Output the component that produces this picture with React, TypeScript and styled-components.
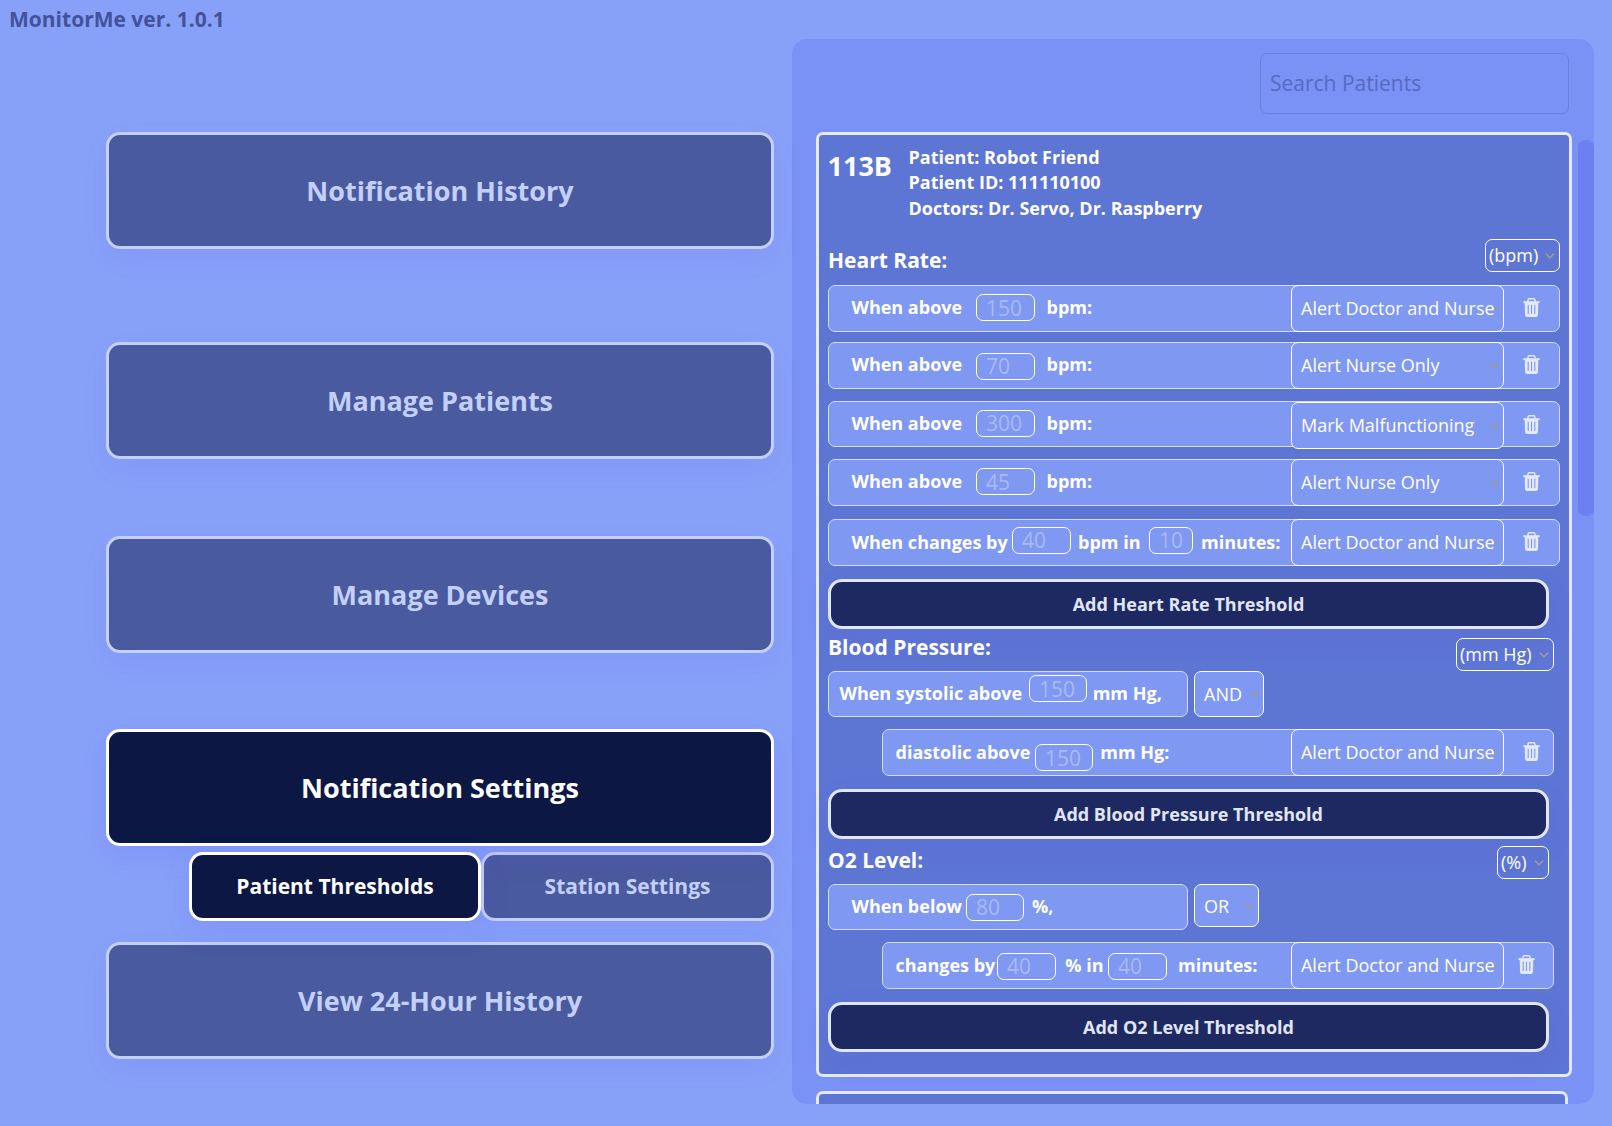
import React from "react";
import styled, { createGlobalStyle, css } from "styled-components";

const GlobalStyle = createGlobalStyle`
  *, *::before, *::after { box-sizing: border-box; }
  html, body { margin: 0; padding: 0; }
  body {
    background: #88a1f8;
    font-family: "Open Sans", "Noto Sans", sans-serif;
    overflow: hidden;
  }
`;

const Screen = styled.main`
  display: flex;
  width: 1612px;
  height: 1126px;
  background: #88a1f8;
  overflow: hidden;
`;

/* ---------- left side: navigation ---------- */

const Sidebar = styled.div`
  display: flex;
  flex-direction: column;
  width: 792px;
`;

const AppTitle = styled.h1`
  margin: 5px 0 0 9px;
  height: 127px;
  font-size: 21px;
  line-height: 28px;
  font-weight: 700;
  color: #43529a;
`;

const Nav = styled.nav`
  display: flex;
  flex-direction: column;
  width: 668px;
  margin-left: 106px;
`;

const NavButton = styled.button<{ $active?: boolean; $gap?: number }>`
  position: relative;
  z-index: ${(p) => (p.$active ? 1 : 0)};
  display: flex;
  align-items: center;
  justify-content: center;
  flex: none;
  height: 117px;
  margin: ${(p) => p.$gap ?? 0}px 0 0;
  padding: 0;
  border: 3px solid ${(p) => (p.$active ? "#ffffff" : "#c3d0fc")};
  border-radius: 14px;
  background: ${(p) => (p.$active ? "#0c1744" : "#4a5a9e")};
  color: ${(p) => (p.$active ? "#ffffff" : "#c3d0fc")};
  box-shadow: 0 10px 28px rgba(85, 80, 255, ${(p) => (p.$active ? 0.15 : 0.1)});
  font: 700 27px/36px "Open Sans", "Noto Sans", sans-serif;
`;

const SubNav = styled.div`
  display: flex;
  margin: 6px 0 0 83px;
`;

const SubButton = styled(NavButton)<{ $w: number }>`
  width: ${(p) => p.$w}px;
  height: 69px;
  padding-bottom: 1px;
  font-size: 21px;
  line-height: 28px;
`;

/* ---------- right side: patient panel ---------- */

const Panel = styled.section`
  display: flex;
  flex-direction: column;
  width: 802px;
  height: 1065px;
  margin-top: 39px;
  border-radius: 15px;
  background: #7a91f5;
  overflow: hidden;
`;

const SearchBox = styled.div`
  display: flex;
  align-items: center;
  flex: none;
  width: 309px;
  height: 61px;
  margin: 14px 25px 18px auto;
  padding: 0 0 1px 9px;
  border: 1px solid #6b80de;
  border-radius: 7px;
  color: #566bc1;
  font-size: 21px;
  line-height: 28px;
`;

const PanelBody = styled.div`
  display: flex;
  align-items: flex-start;
  flex: none;
  padding-left: 24px;
`;

const CardList = styled.div`
  display: flex;
  flex-direction: column;
  gap: 14px;
  width: 756px;
`;

const ScrollThumb = styled.div`
  width: 16px;
  height: 376px;
  margin: 8px 0 0 6px;
  border-radius: 7px;
  background: #6d80f1;
`;

const Card = styled.article<{ $w: number; $h: number }>`
  width: ${(p) => p.$w}px;
  height: ${(p) => p.$h}px;
  padding-left: 9px;
  border: 3px solid #e4e9fd;
  border-radius: 7px;
  background: #5d75d3;
  color: #fff;
`;

const CardHeader = styled.header`
  display: flex;
  height: 104px;
`;

const Room = styled.div`
  width: 81px;
  margin: 13px 0 0 -0.5px;
  font-size: 27px;
  line-height: 36px;
  font-weight: 700;
`;

const PatientInfo = styled.div`
  margin-top: 9.5px;
  font-size: 18px;
  line-height: 25.5px;
  font-weight: 700;
`;

const SectionHead = styled.div<{ $w: number; $h: number }>`
  display: flex;
  justify-content: space-between;
  align-items: flex-start;
  width: ${(p) => p.$w}px;
  height: ${(p) => p.$h}px;
`;

const SectionTitle = styled.h2<{ $top: number }>`
  margin: ${(p) => p.$top}px 0 0;
  font-size: 21px;
  line-height: 28px;
  font-weight: 700;
`;

const Row = styled.div<{
  $cols: string;
  $w?: number;
  $h?: number;
  $gap?: number;
  $indent?: number;
  $pad?: number;
}>`
  display: grid;
  grid-template-columns: ${(p) => p.$cols};
  align-items: start;
  width: ${(p) => p.$w ?? 732}px;
  height: ${(p) => p.$h ?? 47}px;
  margin: ${(p) => p.$gap ?? 0}px 0 0 ${(p) => p.$indent ?? 0}px;
  padding-left: ${(p) => p.$pad ?? 22.5}px;
  border: 1px solid #d3dcfa;
  border-radius: 7px;
  background: #7f98f2;
`;

const Clause = styled.div`
  display: flex;
  align-items: flex-start;
  gap: 6px;
`;

const Label = styled.span<{ $top?: number; $nudge?: boolean }>`
  margin-top: ${(p) => p.$top ?? 9}px;
  margin-left: ${(p) => (p.$nudge ? 1 : 0)}px;
  font-size: 18px;
  line-height: 24px;
  font-weight: 700;
  white-space: nowrap;
`;

const ValueBox = styled.span<{ $top: number; $w?: number; $drop?: boolean }>`
  display: block;
  width: ${(p) => p.$w ?? 59}px;
  height: 27px;
  margin-top: ${(p) => p.$top}px;
  padding: ${(p) => (p.$drop ? 1 : 0)}px 0 0 9px;
  border: 1px solid #fff;
  border-radius: 7px;
  color: #a9baf7;
  font-size: 21px;
  line-height: 24px;
`;

const SelectBox = styled.div<{ $w: number; $h?: number; $top?: number; $compact?: boolean; $pt?: number }>`
  position: relative;
  flex: none;
  width: ${(p) => p.$w}px;
  height: ${(p) => p.$h ?? 47}px;
  margin-top: ${(p) => p.$top ?? 0}px;
  padding: ${(p) => p.$pt ?? 10}px 0 0 9px;
  border: 1px solid #fff;
  border-radius: 7px;
  background: #7f98f2;
  color: #fff;
  font-size: 18px;
  line-height: 24px;
  white-space: nowrap;
  ${(p) =>
    p.$compact &&
    css`
      height: 33px;
      padding: 3px 0 0 3px;
      background: transparent;
    `}
`;

const SelectText = styled.span`
  position: relative;
`;

const ChevronSvg = styled.svg`
  position: absolute;
  right: 4px;
  top: 50%;
  margin-top: -3px;
`;

const TrashButton = styled.span<{ $top?: number; $left?: number }>`
  display: block;
  height: 20px;
  margin: ${(p) => p.$top ?? 12}px 0 0 ${(p) => p.$left ?? 19}px;

  svg {
    display: block;
  }
`;

const AddButton = styled.button`
  display: block;
  width: 721px;
  height: 50px;
  margin: 13px 0 0;
  padding: 0;
  border: 3px solid #e0e5f9;
  border-radius: 14px;
  background: #1d2960;
  color: #e0e5f9;
  box-shadow: 0 10px 28px rgba(85, 80, 240, 0.08);
  font: 700 18px/24px "Open Sans", "Noto Sans", sans-serif;
`;

const Select = ({
  children,
  ...rest
}: React.ComponentProps<typeof SelectBox>) => (
  <SelectBox {...rest}>
    <ChevronSvg width="10" height="6" viewBox="0 0 10 6" fill="none">
      <path d="M0.9 0.7L5 4.8L9.1 0.7" stroke="#9799a4" strokeWidth="1.7" />
    </ChevronSvg>
    <SelectText>{children}</SelectText>
  </SelectBox>
);

const Trash = ({ top, left }: { top?: number; left?: number }) => (
  <TrashButton $top={top} $left={left}>
    <svg width="17" height="20" viewBox="0 0 17 20" fill="none">
      <path d="M5 4V2.2Q5 0.8 6.4 0.8H10.6Q12 0.8 12 2.2V4" stroke="#e3eafd" strokeWidth="1.4" />
      <path d="M0.3 3.2H16.7V5H0.3Z" fill="#e3eafd" />
      <path
        d="M1.7 4.8H15.3L15 16.8Q14.9 19 12.8 19H4.2Q2.1 19 2 16.8Z"
        fill="#e3eafd"
      />
      <path d="M5.2 6.8V16M8.5 6.8V16M11.8 6.8V16" stroke="#7f98f2" strokeWidth="1.1" />
    </svg>
  </TrashButton>
);

const LIMIT_COLS = "124.5px 69.5px 245.5px 213px 1fr";

const heartLimits = [
  { value: "150", action: "Alert Doctor and Nurse", gap: 0, h: 47, inputTop: 8, drop: true, selectTop: -1, trashTop: 12 },
  { value: "70", action: "Alert Nurse Only", gap: 10, h: 47, inputTop: 10, drop: false, selectTop: -1, trashTop: 12 },
  { value: "300", action: "Mark Malfunctioning", gap: 12, h: 46, inputTop: 8, drop: false, selectTop: 0, trashTop: 13 },
  { value: "45", action: "Alert Nurse Only", gap: 12, h: 47, inputTop: 8, drop: true, selectTop: -1, trashTop: 12 },
];

const HeartRate = () => (
  <section>
    <SectionHead $w={732} $h={46}>
      <SectionTitle $top={7}>Heart Rate:</SectionTitle>
      <Select $w={75} $compact>(bpm)</Select>
    </SectionHead>
    {heartLimits.map((t) => (
      <Row key={t.value} $cols={LIMIT_COLS} $gap={t.gap} $h={t.h}>
        <Label>When above</Label>
        <ValueBox $top={t.inputTop} $drop={t.drop}>{t.value}</ValueBox>
        <Label $nudge>bpm:</Label>
        <Select $w={213} $top={t.selectTop}>{t.action}</Select>
        <Trash top={t.trashTop} />
      </Row>
    ))}
    <Row $cols="160.5px 65px 72px 51px 91px 213px 1fr" $gap={13}>
      <Label $top={10}>When changes by</Label>
      <ValueBox $top={7}>40</ValueBox>
      <Label $top={10} $nudge>bpm in</Label>
      <ValueBox $top={7} $w={44}>10</ValueBox>
      <Label $top={10} $nudge>minutes:</Label>
      <Select $w={213} $top={-1}>Alert Doctor and Nurse</Select>
      <Trash />
    </Row>
    <AddButton>Add Heart Rate Threshold</AddButton>
  </section>
);

const BloodPressure = () => (
  <section>
    <SectionHead $w={726} $h={42}>
      <SectionTitle $top={4}>Blood Pressure:</SectionTitle>
      <Select $w={98} $top={9} $compact>(mm Hg)</Select>
    </SectionHead>
    <Clause>
      <Row $cols="189.5px 62.7px 1fr" $w={360} $h={46} $pad={10.5}>
        <Label>When systolic above</Label>
        <ValueBox $top={3} $w={58} $drop>150</ValueBox>
        <Label $nudge>mm Hg,</Label>
      </Row>
      <Select $w={70} $h={46}>AND</Select>
    </Clause>
    <Row $cols="140.5px 64.3px 191.7px 213px 1fr" $w={672} $gap={12} $indent={54} $pad={11.5}>
      <Label $top={10} $nudge>diastolic above</Label>
      <ValueBox $top={14} $w={58} $drop>150</ValueBox>
      <Label $top={10} $nudge>mm Hg:</Label>
      <Select $w={213} $top={-1}>Alert Doctor and Nurse</Select>
      <Trash />
    </Row>
    <AddButton>Add Blood Pressure Threshold</AddButton>
  </section>
);

const OxygenLevel = () => (
  <section>
    <SectionHead $w={721} $h={45}>
      <SectionTitle $top={7}>O2 Level:</SectionTitle>
      <Select $w={52} $top={7} $compact>(%)</Select>
    </SectionHead>
    <Clause>
      <Row $cols="114.5px 66px 1fr" $w={360} $h={46}>
        <Label>When below</Label>
        <ValueBox $top={9} $w={58}>80</ValueBox>
        <Label>%,</Label>
      </Row>
      <Select $w={65} $h={43} $pt={9}>OR</Select>
    </Clause>
    <Row $cols="102.5px 67.3px 43.7px 69px 114px 213px 1fr" $w={672} $gap={12} $indent={54} $pad={11.5}>
      <Label $top={10} $nudge>changes by</Label>
      <ValueBox $top={10}>40</ValueBox>
      <Label $top={10} $nudge>% in</Label>
      <ValueBox $top={10}>40</ValueBox>
      <Label $top={10} $nudge>minutes:</Label>
      <Select $w={213} $top={-1}>Alert Doctor and Nurse</Select>
      <Trash left={14} />
    </Row>
    <AddButton>Add O2 Level Threshold</AddButton>
  </section>
);

export default function App() {
  return (
    <>
      <GlobalStyle />
      <Screen>
        <Sidebar>
          <AppTitle>MonitorMe ver. 1.0.1</AppTitle>
          <Nav>
            <NavButton>Notification History</NavButton>
            <NavButton $gap={93}>Manage Patients</NavButton>
            <NavButton $gap={77}>Manage Devices</NavButton>
            <NavButton $gap={76} $active>Notification Settings</NavButton>
            <SubNav>
              <SubButton $w={292} $active>Patient Thresholds</SubButton>
              <SubButton $w={293}>Station Settings</SubButton>
            </SubNav>
            <NavButton $gap={21}>View 24-Hour History</NavButton>
          </Nav>
        </Sidebar>
        <Panel>
          <SearchBox>Search Patients</SearchBox>
          <PanelBody>
            <CardList>
              <Card $w={756} $h={945}>
                <CardHeader>
                  <Room>113B</Room>
                  <PatientInfo>
                    <div>Patient: Robot Friend</div>
                    <div>Patient ID: 111110100</div>
                    <div>Doctors: Dr. Servo, Dr. Raspberry</div>
                  </PatientInfo>
                </CardHeader>
                <HeartRate />
                <BloodPressure />
                <OxygenLevel />
              </Card>
              <Card $w={752} $h={120} />
            </CardList>
            <ScrollThumb />
          </PanelBody>
        </Panel>
      </Screen>
    </>
  );
}
